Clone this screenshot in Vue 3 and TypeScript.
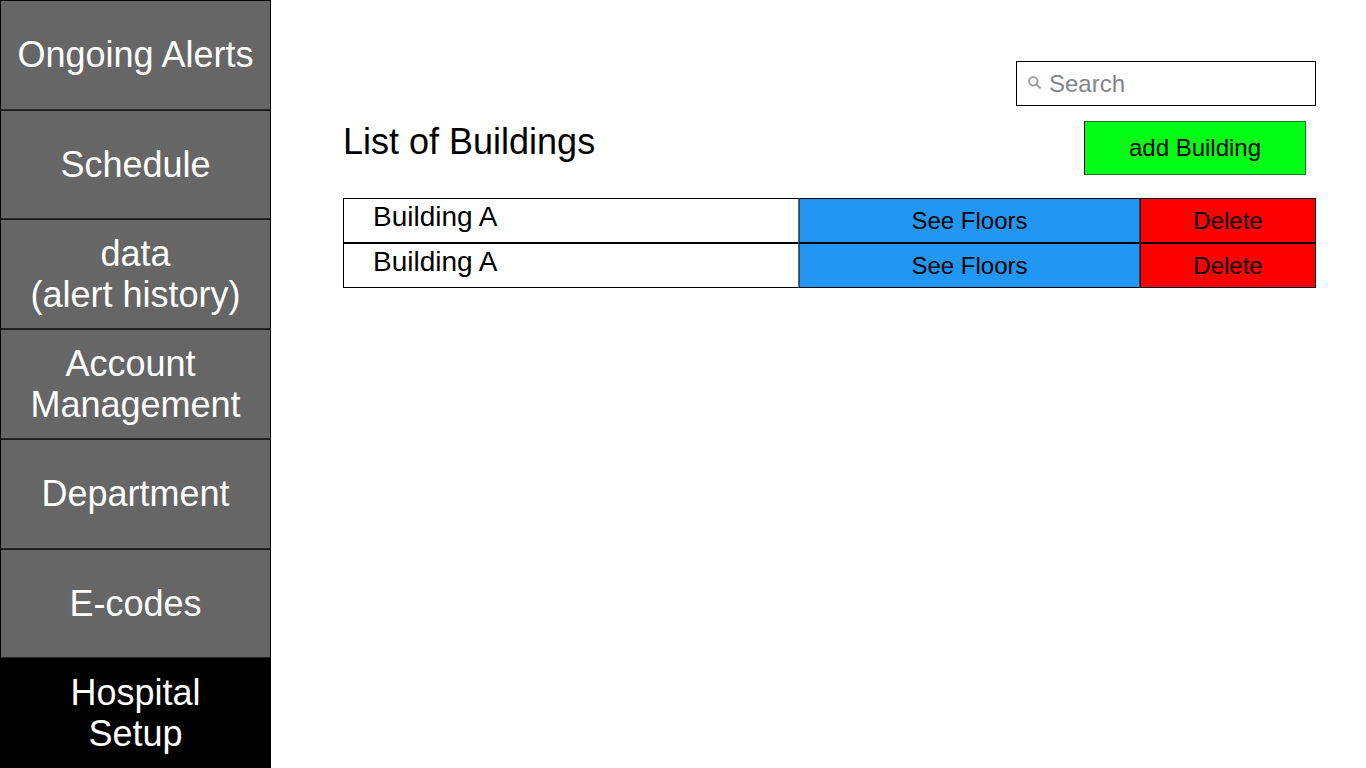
<script setup lang="ts">
import { ref } from 'vue'

interface NavItem {
  id: string
  label: string
}

interface Building {
  id: number
  name: string
}

const navItems: NavItem[] = [
  { id: 'alerts', label: 'Ongoing Alerts' },
  { id: 'schedule', label: 'Schedule' },
  { id: 'data', label: 'data\n(alert history)' },
  { id: 'account', label: 'Account \nManagement' },
  { id: 'department', label: 'Department' },
  { id: 'ecodes', label: 'E-codes' },
  { id: 'setup', label: 'Hospital\nSetup' },
]

const active = ref('setup')
const query = ref('')
const buildings = ref<Building[]>([
  { id: 1, name: 'Building A' },
  { id: 2, name: 'Building A' },
])

function addBuilding(): void {
  buildings.value.push({ id: Date.now(), name: 'Building A' })
}

function removeBuilding(id: number): void {
  buildings.value = buildings.value.filter((b) => b.id !== id)
}
</script>

<template>
  <div class="layout">
    <nav class="sidebar">
      <a
        v-for="item in navItems"
        :key="item.id"
        :href="'#' + item.id"
        class="nav-item"
        :class="{ active: item.id === active }"
        @click="active = item.id"
      ><span class="nav-label">{{ item.label }}</span></a>
    </nav>

    <main class="content">
      <label class="search">
        <svg class="search-icon" viewBox="0 0 14 14" aria-hidden="true">
          <circle cx="5.3" cy="5.2" r="4.2" />
          <path d="M8.3 8.2 L12.6 12.5" />
        </svg>
        <input v-model="query" class="search-input" type="text" placeholder="Search" aria-label="Search" />
      </label>

      <header class="heading">
        <h1 class="title">List of Buildings</h1>
        <button type="button" class="add" @click="addBuilding">add Building</button>
      </header>

      <table class="buildings">
        <colgroup>
          <col />
          <col class="col-floors" />
          <col class="col-delete" />
        </colgroup>
        <tbody>
          <tr v-for="b in buildings" :key="b.id">
            <td class="name">{{ b.name }}</td>
            <td><button type="button" class="action floors">See Floors</button></td>
            <td><button type="button" class="action delete" @click="removeBuilding(b.id)">Delete</button></td>
          </tr>
        </tbody>
      </table>
    </main>
  </div>
</template>

<style>
body {
  margin: 0;
  background: #fff;
}
</style>

<style scoped>
.layout {
  display: flex;
  min-height: 100vh;
  font-family: "Liberation Sans", Arial, sans-serif;
  color: #000;
}

.layout * {
  box-sizing: border-box;
}

.sidebar {
  flex: none;
  width: 271px;
  display: grid;
  grid-auto-rows: 1fr;
}

.nav-item {
  display: flex;
  align-items: center;
  justify-content: center;
  border: 1px solid #000;
  border-top-color: #1c1c1c;
  border-bottom-color: #262626;
  background: #666;
  color: #fff;
  font-size: 36px;
  line-height: 41px;
  text-align: center;
  text-decoration: none;
}

.nav-item:first-child {
  border-top-color: #000;
}

.nav-label {
  white-space: pre;
}

.nav-item.active {
  border-color: #000;
  background: #000;
}

.content {
  flex: 1;
  min-width: 0;
  padding: 61px 50px 48px 72px;
  display: flex;
  flex-direction: column;
}

.search {
  align-self: flex-end;
  display: flex;
  align-items: center;
  width: 300px;
  height: 45px;
  padding-left: 11px;
  border: 1px solid #000;
}

.search-icon {
  flex: none;
  width: 14px;
  height: 14px;
  margin: 0 7px 2px 0;
  fill: none;
  stroke: #a0a0a0;
  stroke-width: 2;
}

.search-input {
  flex: 1;
  min-width: 0;
  height: 100%;
  padding: 0;
  border: 0;
  outline: 0;
  background: transparent;
  font: inherit;
  font-size: 24px;
  color: #000;
}

.search-input::placeholder {
  color: #80868b;
  opacity: 1;
}

.heading {
  display: flex;
  justify-content: space-between;
  align-items: flex-start;
  margin-top: 15px;
  padding-right: 10px;
}

.title {
  margin: 0;
  font-size: 36px;
  line-height: 41px;
  font-weight: 400;
}

.add {
  width: 222px;
  height: 54px;
  padding: 0 0 1px;
  border: 1px solid #1a7a24;
  border-left-color: #000;
  background: #00ff14;
  color: #000;
  font: inherit;
  font-size: 24px;
}

.buildings {
  width: 100%;
  margin-top: 23px;
  border-collapse: separate;
  border-spacing: 0;
  table-layout: fixed;
}

.col-floors {
  width: 341px;
}

.col-delete {
  width: 176px;
}

td {
  height: 45px;
  padding: 0;
}

.name {
  padding: 2px 0 0 29px;
  border: 1px solid #000;
  border-right-color: #666;
  font-size: 28px;
  line-height: 32px;
  vertical-align: top;
}

.action {
  display: block;
  width: 100%;
  height: 45px;
  padding: 0;
  border: 1px solid #000;
  color: #000;
  font: inherit;
  font-size: 24px;
}

.floors {
  border-left-color: #1b4a72;
  border-right-color: #1b4a72;
  background: #2196f3;
}

.delete {
  border-left-color: #400;
  background: #f00;
}
</style>
